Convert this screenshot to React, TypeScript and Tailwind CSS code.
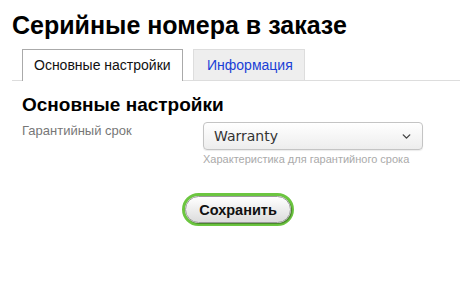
import { ChevronDown } from "lucide-react";

export default function App() {
    return (
        <div className="min-h-[294px] w-[460px] bg-white font-['Liberation_Sans',Arial,sans-serif]">
            <h1 className="px-3 pt-[10px] text-[25px] leading-[30px] font-bold text-black">
                Серийные номера в заказе
            </h1>

            <div className="mt-[9px] ml-3 flex gap-[10px] border-b border-[#dddddd] pl-[10px]">
                <div className="-mb-px h-[32px] w-[161px] border border-b-0 border-[#aaaaaa] bg-white pt-[7px] pl-[11px] text-[14px] leading-[16px] text-[#111]">
                    Основные настройки
                </div>
                <div className="h-[31px] w-[112px] border border-b-0 border-[#dddddd] bg-[#eeeeee] pt-[7px] pl-[13px] text-[14px] leading-[16px] text-[#1a3fd6]">
                    Информация
                </div>
            </div>

            <div className="px-[22px] pt-[13px]">
                <h2 className="text-[19px] leading-[22px] font-bold text-black">
                    Основные настройки
                </h2>

                <div className="mt-[6px] flex">
                    <div className="w-[181px] pt-[1px] text-[13px] leading-[15px] text-[#777777]">
                        Гарантийный срок
                    </div>
                    <div className="flex flex-col">
                        <div className="flex h-[28px] w-[220px] items-center justify-between rounded-[4px] border border-[#c4c4c4] bg-gradient-to-b from-white to-[#ededed] pr-[9px] pl-[10px] shadow-[0_1px_1px_rgba(0,0,0,0.08)]">
                            <span className="font-['DejaVu_Sans',sans-serif] text-[14px] leading-[16px] text-[#333]">
                                Warranty
                            </span>
                            <ChevronDown className="size-[13px] text-[#444]" strokeWidth={2.6} />
                        </div>
                        <div className="mt-[3px] text-[11px] leading-[13px] text-[#aaaaaa]">
                            Характеристика для гарантийного срока
                        </div>
                    </div>
                </div>
            </div>

            <div className="mt-[27px] flex justify-center pl-[16px]">
                <button className="h-[33px] w-[112px] rounded-full border-[3px] border-[#6cc640] bg-white">
                    <div className="flex h-full w-full items-center justify-center rounded-full border border-[#9a9a9a] bg-gradient-to-b from-white to-[#dcdcdc] text-[14.5px] leading-[16px] font-bold text-[#111] shadow-[1px_1px_1px_rgba(0,0,0,0.35)]">
                        Сохранить
                    </div>
                </button>
            </div>
        </div>
    );
}
